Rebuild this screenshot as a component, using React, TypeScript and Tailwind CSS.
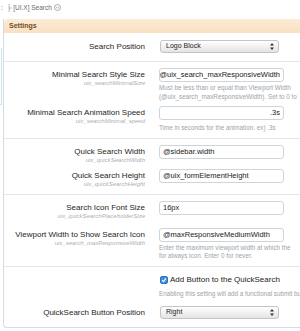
import React from 'react'

const font = { fontFamily: '"Liberation Sans", Arial, sans-serif' }

const Label = ({ title, hint }: { title: string; hint?: string }) => (
  <div className="h-[14px] pt-[2px] text-right">
    <div className="text-[8px] leading-[10px] text-[#1e1e1e] whitespace-nowrap">{title}</div>
    {hint && (
      <div className="text-[6px] leading-[7px] italic text-[#a9b0b6] whitespace-nowrap">{hint}</div>
    )}
  </div>
)

const TextBox = ({ value, right }: { value: string; right?: boolean }) => (
  <div
    className={`h-[14px] w-[125px] rounded-[3px] border border-[#cdd4da] bg-white px-[3px] flex items-center text-[7.5px] text-[#222] whitespace-nowrap overflow-hidden ${
      right ? 'justify-end' : ''
    }`}
  >
    {value}
  </div>
)

const Select = ({ value }: { value: string }) => (
  <div className="h-[13px] w-[119px] ml-[1px] rounded-[3px] border border-[#c4c4c4] bg-gradient-to-b from-white to-[#e4e4e4] pl-[5px] pr-[4px] flex items-center justify-between text-[7px] text-[#222]">
    <span>{value}</span>
    <svg width="4" height="7" viewBox="0 0 4 7">
      <path d="M2 0 L4 2.6 H0 Z M2 7 L0 4.4 H4 Z" fill="#333" />
    </svg>
  </div>
)

const Note = ({ children, className = '' }: { children: React.ReactNode; className?: string }) => (
  <div className={`text-[6.3px] leading-[8.5px] text-[#9da3a8] whitespace-nowrap ${className}`}>{children}</div>
)

const Row = ({
  title,
  hint,
  children,
  className = '',
}: {
  title?: string
  hint?: string
  children: React.ReactNode
  className?: string
}) => (
  <div className={`grid grid-cols-[141px_1fr] items-start ${className}`}>
    <div>{title && <Label title={title} hint={hint} />}</div>
    <div className="pl-[14px]">{children}</div>
  </div>
)

const Group = ({ children, className = '' }: { children: React.ReactNode; className?: string }) => (
  <div className={`border-b border-[#e1e7ec] ${className}`}>{children}</div>
)

export default function App() {
  return (
    <div className="w-[300px] h-[331px] overflow-hidden bg-white" style={font}>
      {/* breadcrumb */}
      <div className="h-[19px] pt-[4px] flex items-start leading-[8px] text-[6.5px] text-[#6a6a6a] whitespace-nowrap">
        <span className="ml-[1px]">:</span>
        <span className="ml-[4px]">├ [UI.X] Search</span>
        <svg className="ml-[2px]" width="7" height="7" viewBox="0 0 8 8">
          <circle cx="4" cy="4" r="3.4" fill="none" stroke="#8a8a8a" strokeWidth="0.8" />
          <path d="M2.4 3.3 L4 4.9 L5.6 3.3" fill="none" stroke="#8a8a8a" strokeWidth="0.8" />
        </svg>
      </div>

      <div className="flex">
        <div className="w-[3px] shrink-0">
          <div className="mt-[29px] h-[57px] w-[2px] border-r border-b border-[#cfe0ec]" />
        </div>

        <div className="w-[320px] shrink-0 border-l border-b border-[#d5dce2] rounded-bl-[4px]">
          {/* header */}
          <div className="h-[14px] rounded-tl-[4px] bg-gradient-to-b from-[#fcebd6] to-[#f9e0c2] pl-[5px] flex items-center text-[7px] font-bold text-[#6e4f27]">
            Settings
          </div>

          <Group className="pt-[7px] pb-[7px]">
            <Row title="Search Position">
              <Select value="Logo Block" />
            </Row>
          </Group>

          <Group className="pt-[6px] pb-[5px]">
            <Row title="Minimal Search Style Size" hint="uix_searchMinimalSize">
              <TextBox value="@uix_search_maxResponsiveWidth" right />
              <Note className="mt-[2px]">
                Must be less than or equal than Viewport Width
                <br />
                (@uix_search_maxResponsiveWidth). Set to 0 to
              </Note>
            </Row>
            <Row title="Minimal Search Animation Speed" hint="uix_searchMinimal_speed" className="mt-[5px]">
              <TextBox value=".3s" right />
              <Note className="mt-[4px]">Time in seconds for the animation. ex) .3s</Note>
            </Row>
          </Group>

          <Group className="pt-[6px] pb-[11px]">
            <Row title="Quick Search Width" hint="uix_quickSearchWidth">
              <TextBox value="@sidebar.width" />
            </Row>
            <Row title="Quick Search Height" hint="uix_quickSearchHeight" className="mt-[10px]">
              <TextBox value="@uix_formElementHeight" />
            </Row>
          </Group>

          <Group className="pt-[6px] pb-[5px]">
            <Row title="Search Icon Font Size" hint="uix_quickSearchPlaceholderSize">
              <TextBox value="16px" />
            </Row>
            <Row title="Viewport Width to Show Search Icon" hint="uix_search_maxResponsiveWidth" className="mt-[13px]">
              <TextBox value="@maxResponsiveMediumWidth" />
              <Note className="mt-[2px]">
                Enter the maximum viewport width at which the
                <br />
                for always icon. Enter 0 for never.
              </Note>
            </Row>
          </Group>

          <div className="pt-[8px] pb-[7px]">
            <Row>
              <div className="flex items-center h-[10px] whitespace-nowrap">
                <div className="ml-[1px] w-[8px] h-[8px] rounded-[2px] bg-[#3d8de0] border border-[#2f74c0] flex items-center justify-center">
                  <svg width="6" height="6" viewBox="0 0 6 6">
                    <path d="M1 3.2 L2.4 4.6 L5 1.4" fill="none" stroke="white" strokeWidth="1.1" />
                  </svg>
                </div>
                <span className="ml-[2px] text-[8px] text-[#222]">Add Button to the QuickSearch</span>
              </div>
              <Note className="mt-[4px] leading-[9px]">Enabling this setting will add a functional submit button</Note>
            </Row>
            <Row title="QuickSearch Button Position" className="mt-[8px]">
              <Select value="Right" />
            </Row>
          </div>
        </div>
      </div>
    </div>
  )
}
